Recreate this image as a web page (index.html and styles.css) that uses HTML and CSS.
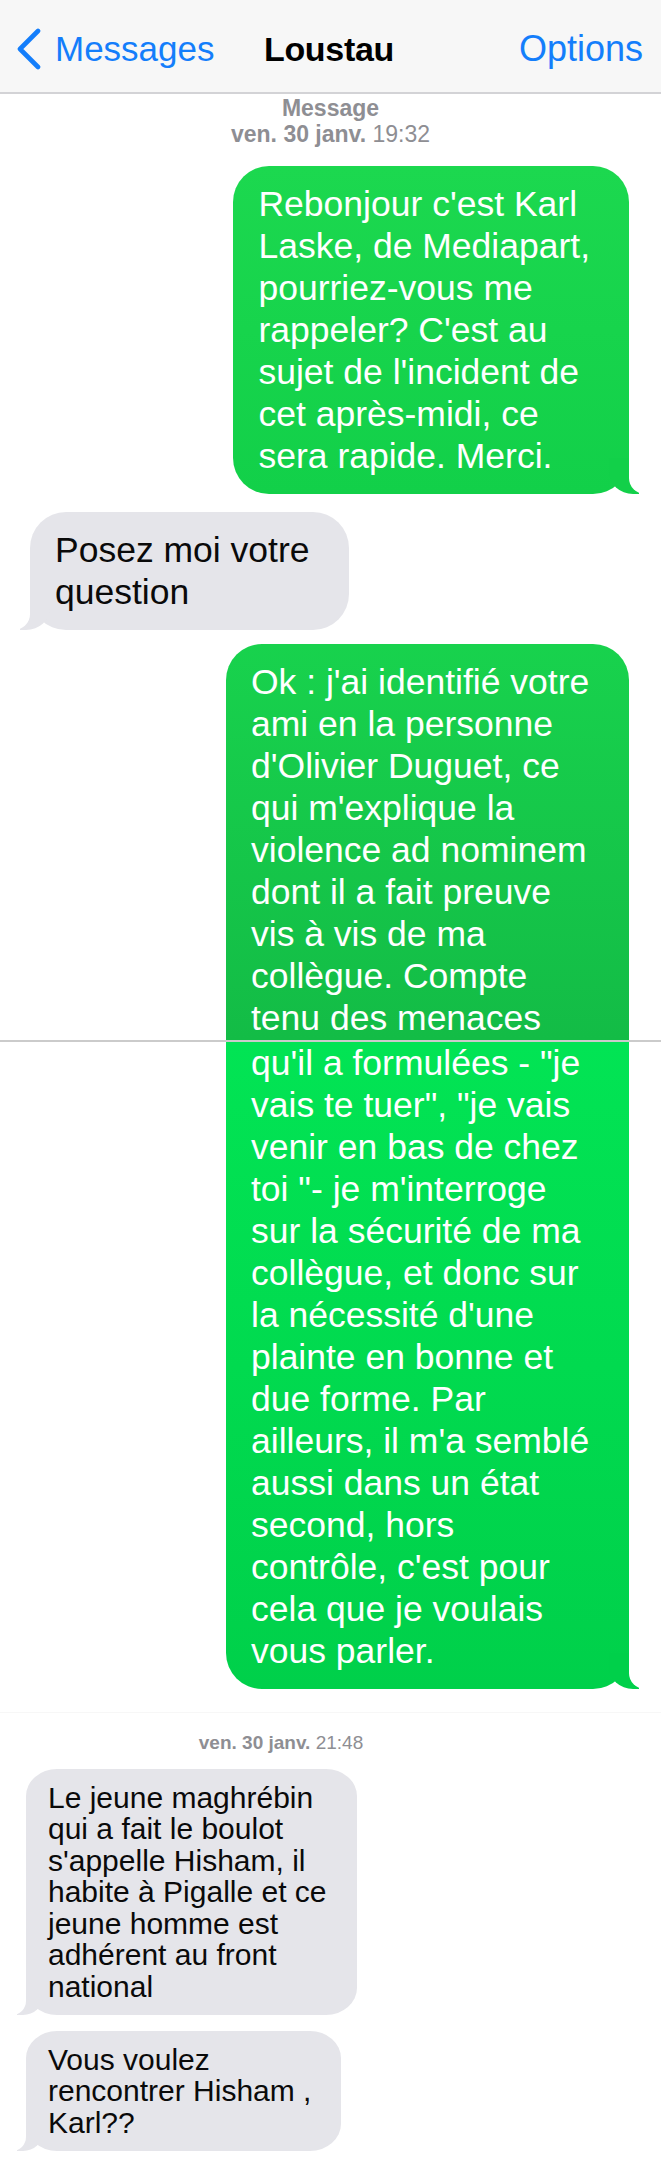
FILE: index.html
```html
<!DOCTYPE html>
<html lang="fr">
<head>
<meta charset="utf-8">
<title>Loustau</title>
<link rel="stylesheet" href="styles.css">
</head>
<body>
<header class="nav">
  <div class="back">
    <svg class="chev" width="28" height="42" viewBox="0 0 28 42"><path d="M23 3 L5 21 L23 39" fill="none" stroke="#147efb" stroke-width="4.6" stroke-linecap="round" stroke-linejoin="round"/></svg>
    <span>Messages</span>
  </div>
  <div class="title">Loustau</div>
  <div class="options">Options</div>
</header>

<section class="shot shot-1">
  <div class="meta">
    <div class="meta-title">Message</div>
    <div class="meta-date"><b>ven. 30 janv.</b> 19:32</div>
  </div>

  <div class="row out">
    <div class="bubble green g1 tail-right">Rebonjour c'est Karl<br>Laske, de Mediapart,<br>pourriez-vous me<br>rappeler? C'est au<br>sujet de l'incident de<br>cet après-midi, ce<br>sera rapide. Merci.</div>
  </div>

  <div class="row in gap-a">
    <div class="bubble gray tail-left">Posez moi votre<br>question</div>
  </div>

  <div class="row out gap-b">
    <div class="bubble green g2a part-top">Ok : j'ai identifié votre<br>ami en la personne<br>d'Olivier Duguet, ce<br>qui m'explique la<br>violence ad nominem<br>dont il a fait preuve<br>vis à vis de ma<br>collègue. Compte<br>tenu des menaces</div>
  </div>
</section>

<div class="seam"></div>

<section class="shot shot-2">
  <div class="row out">
    <div class="bubble green g2b part-bottom tail-right">qu'il a formulées - "je<br>vais te tuer", "je vais<br>venir en bas de chez<br>toi "- je m'interroge<br>sur la sécurité de ma<br>collègue, et donc sur<br>la nécessité d'une<br>plainte en bonne et<br>due forme. Par<br>ailleurs, il m'a semblé<br>aussi dans un état<br>second, hors<br>contrôle, c'est pour<br>cela que je voulais<br>vous parler.</div>
  </div>
</section>

<div class="seam faint"></div>

<section class="shot shot-3">
  <div class="meta-small"><b>ven. 30 janv.</b> 21:48</div>
  <div class="row in small">
    <div class="bubble gray small tail-left">Le jeune maghrébin<br>qui a fait le boulot<br>s'appelle Hisham, il<br>habite à Pigalle et ce<br>jeune homme est<br>adhérent au front<br>national</div>
  </div>
  <div class="row in small gap-c">
    <div class="bubble gray small tail-left">Vous voulez<br>rencontrer Hisham ,<br>Karl??</div>
  </div>
</section>
</body>
</html>
```

FILE: styles.css
```css
* { box-sizing: border-box; }

html, body {
  margin: 0;
  padding: 0;
  background: #ffffff;
}

body {
  width: 661px;
  height: 2162px;
  overflow: hidden;
  font-family: "Liberation Sans", Arial, "Helvetica Neue", sans-serif;
  color: #000;
}

/* ---------- navigation bar ---------- */
.nav {
  height: 94px;
  background: #f7f7f7;
  border-bottom: 2px solid #d3d3d6;
  display: grid;
  grid-template-columns: 1fr auto 1fr;
  align-items: center;
  padding: 6px 18px 0 15px;
}

.back {
  display: flex;
  align-items: center;
  gap: 12px;
  color: #147efb;
  font-size: 35px;
  justify-self: start;
}

.chev { display: block; }

.title {
  font-size: 34px;
  font-weight: bold;
  letter-spacing: -0.3px;
  color: #000;
}

.options {
  justify-self: end;
  color: #147efb;
  font-size: 36px;
}

/* ---------- conversation ---------- */
.shot-1 { padding-top: 1px; }

.meta {
  text-align: center;
  color: #8e8e93;
  font-size: 23px;
  line-height: 26px;
  margin-bottom: 19px;
}

.meta-title { font-weight: bold; }
.meta b, .meta-small b { font-weight: bold; }

.row { display: flex; }
.row.out { justify-content: flex-end; padding-right: 32px; }
.row.in { justify-content: flex-start; padding-left: 30px; }
.gap-a { margin-top: 18px; }
.gap-b { margin-top: 14px; }
.gap-c { margin-top: 16px; }

.bubble {
  position: relative;
  font-size: 35.5px;
  line-height: 42px;
  padding: 17px 39px 17px 25px;
  border-radius: 36px;
  white-space: nowrap;
}

.bubble.green { color: #fff; }
.bubble.gray { background: #e5e5ea; color: #0a0a0a; --tail: #e5e5ea; }

.g1 {
  background: linear-gradient(#1cd84f, #12d049);
  --tail: #12d049;
}

.g2a {
  background: linear-gradient(#18d24d, #13bc46);
}

.g2b {
  background: linear-gradient(#02e454, #00d04a);
  --tail: #00d04a;
}

.part-top {
  width: 403px;
  border-radius: 36px 36px 0 0;
  padding-bottom: 1px;
}

.part-bottom {
  width: 403px;
  border-radius: 0 0 36px 36px;
  padding-top: 0;
}

/* tails */
.tail-right::before {
  content: "";
  position: absolute;
  right: -10px;
  bottom: 0;
  width: 30px;
  height: 36px;
  background: var(--tail);
  border-bottom-left-radius: 24px 22px;
}
.tail-right::after {
  content: "";
  position: absolute;
  right: -40px;
  bottom: 0;
  width: 40px;
  height: 36px;
  background: #fff;
  border-bottom-left-radius: 16px;
}

.tail-left::before {
  content: "";
  position: absolute;
  left: -10px;
  bottom: 0;
  width: 30px;
  height: 36px;
  background: var(--tail);
  border-bottom-right-radius: 24px 22px;
}
.tail-left::after {
  content: "";
  position: absolute;
  left: -40px;
  bottom: 0;
  width: 40px;
  height: 36px;
  background: #fff;
  border-bottom-right-radius: 16px;
}

/* screenshot seams */
.seam {
  height: 2px;
  background: #cbcbcb;
}
.seam.faint {
  height: 1px;
  margin-top: 23px;
  background: #f7f7f7;
}

/* lower, smaller screenshot */
.shot-3 {
  width: 562px;
  padding-top: 19px;
}

.meta-small {
  text-align: center;
  color: #8e8e93;
  font-size: 19px;
  line-height: 22px;
  margin-bottom: 15px;
}

.row.in.small { padding-left: 26px; }

.bubble.small {
  font-size: 30px;
  line-height: 31.5px;
  padding: 12.75px 30px 12.75px 22px;
  border-radius: 31px / 27px;
}

.bubble.small.tail-left::before {
  left: -9px;
  width: 26px;
  height: 30px;
  border-bottom-right-radius: 20px 19px;
}
.bubble.small.tail-left::after {
  left: -34px;
  width: 34px;
  height: 30px;
  border-bottom-right-radius: 14px;
}
```
